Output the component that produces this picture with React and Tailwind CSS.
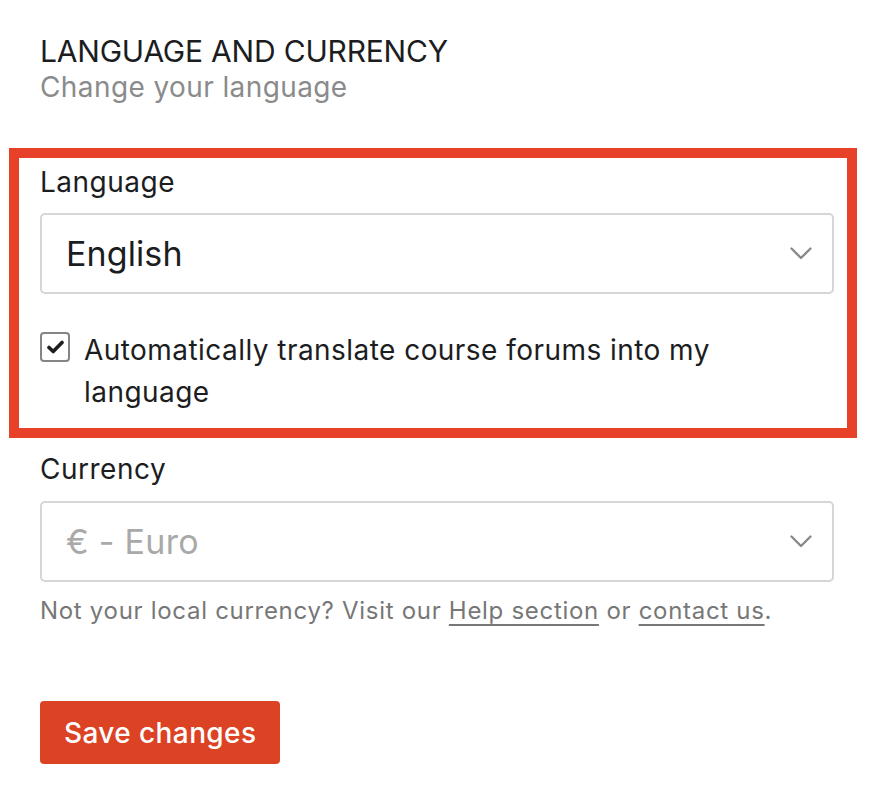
import React, { useState } from "react";

const Chevron = () => (
  <svg width="22" height="13" viewBox="0 0 22 13" fill="none" className="shrink-0">
    <path d="M1.5 1.5 L11 11 L20.5 1.5" stroke="#8a8a8a" strokeWidth="2.4" strokeLinecap="round" strokeLinejoin="round" />
  </svg>
);

const SelectBox = ({ value, muted }) => (
  <div className="h-[81px] border-2 border-[#d6d6d6] rounded-[5px] flex items-center justify-between pl-[24px] pr-[20px] bg-white">
    <span className={muted ? "text-[34px] tracking-[0.3px] text-[#a9a9a9]" : "text-[34px] tracking-[0.1px] text-[#1c1d1f]"}>{value}</span>
    <Chevron />
  </div>
);

export default function App() {
  const [translate, setTranslate] = useState(true);

  return (
    <div className="w-[890px] h-[802px] bg-white font-['Inter',sans-serif] text-[#1c1d1f]">
      {/* Header */}
      <div className="pl-[40px] pt-[33px]">
        <h2 className="text-[30px] leading-[36px] font-normal tracking-[-0.2px]">LANGUAGE AND CURRENCY</h2>
        <p className="text-[28px] leading-[37px] tracking-[0.4px] text-[#8b8b8b]">Change your language</p>
      </div>

      {/* Language (highlighted) */}
      <div className="mt-[42px] ml-[9px] mr-[33px] border-[10px] border-[#e8412a] pl-[21px] pr-[13px] pt-[6px] pb-[15px]">
        <div className="text-[28px] leading-[36px] tracking-[0.5px]">Language</div>
        <div className="mt-[13px]">
          <SelectBox value="English" />
        </div>
        <label className="mt-[35px] flex items-start gap-[14px] cursor-pointer">
          <button
            onClick={() => setTranslate(!translate)}
            className="mt-[3px] w-[30px] h-[30px] shrink-0 border-2 border-[#858585] rounded-[4px] flex items-center justify-center bg-white"
          >
            {translate && (
              <svg width="17" height="14" viewBox="0 0 17 14" fill="none">
                <path d="M2 7.5 L6.2 11.5 L15 2.5" stroke="#1c1d1f" strokeWidth="3.6" strokeLinecap="round" strokeLinejoin="round" />
              </svg>
            )}
          </button>
          <span className="text-[28px] leading-[42px] tracking-[0.45px] pr-[90px]">
            Automatically translate course forums into my language
          </span>
        </label>
      </div>

      {/* Currency */}
      <div className="pl-[40px] pr-[56px] mt-[13px]">
        <div className="text-[28px] leading-[36px] tracking-[0.5px]">Currency</div>
        <div className="mt-[14px]">
          <SelectBox value="€ - Euro" muted />
        </div>
        <p className="mt-[13px] text-[24px] leading-[32px] tracking-[0.7px] text-[#777777]">
          Not your local currency? Visit our{" "}
          <a href="#" className="underline decoration-2 underline-offset-[5px]">Help section</a> or{" "}
          <a href="#" className="underline decoration-2 underline-offset-[5px]">contact us</a>.
        </p>
        <button className="mt-[74px] h-[63px] px-[24px] bg-[#dc4224] text-white text-[28px] tracking-[0.4px] rounded-[4px] font-medium">
          Save changes
        </button>
      </div>
    </div>
  );
}
